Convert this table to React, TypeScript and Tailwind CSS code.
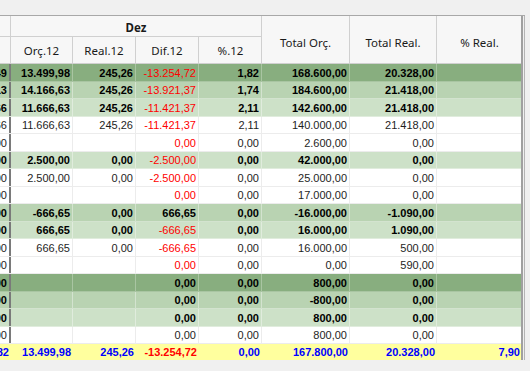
import React from "react";

type Kind = "dark" | "mid" | "light" | "white";
type Row = { k: Kind; c: string[]; red?: boolean };

const rows: Row[] = [
  { k: "dark", c: ["49", "13.499,98", "245,26", "-13.254,72", "1,82", "168.600,00", "20.328,00", ""], red: true },
  { k: "mid", c: ["13", "14.166,63", "245,26", "-13.921,37", "1,74", "184.600,00", "21.418,00", ""], red: true },
  { k: "light", c: ["66", "11.666,63", "245,26", "-11.421,37", "2,11", "142.600,00", "21.418,00", ""], red: true },
  { k: "white", c: ["66", "11.666,63", "245,26", "-11.421,37", "2,11", "140.000,00", "21.418,00", ""], red: true },
  { k: "white", c: ["00", "", "", "0,00", "0,00", "2.600,00", "0,00", ""], red: true },
  { k: "light", c: ["00", "2.500,00", "0,00", "-2.500,00", "0,00", "42.000,00", "0,00", ""], red: true },
  { k: "white", c: ["00", "2.500,00", "0,00", "-2.500,00", "0,00", "25.000,00", "0,00", ""], red: true },
  { k: "white", c: ["00", "", "", "0,00", "0,00", "17.000,00", "0,00", ""], red: true },
  { k: "mid", c: ["00", "-666,65", "0,00", "666,65", "0,00", "-16.000,00", "-1.090,00", ""] },
  { k: "light", c: ["00", "666,65", "0,00", "-666,65", "0,00", "16.000,00", "1.090,00", ""], red: true },
  { k: "white", c: ["00", "666,65", "0,00", "-666,65", "0,00", "16.000,00", "500,00", ""], red: true },
  { k: "white", c: ["00", "", "", "0,00", "0,00", "0,00", "590,00", ""], red: true },
  { k: "dark", c: ["00", "", "", "0,00", "0,00", "800,00", "0,00", ""] },
  { k: "mid", c: ["00", "", "", "0,00", "0,00", "-800,00", "0,00", ""] },
  { k: "light", c: ["00", "", "", "0,00", "0,00", "800,00", "0,00", ""] },
  { k: "white", c: ["00", "", "", "0,00", "0,00", "800,00", "0,00", ""] },
];

const widths = ["w-[11px]", "w-[62px]", "w-[63px]", "w-[63px]", "w-[63px]", "w-[88px]", "w-[87px]", "w-[85px]"];

const bgOf: Record<Kind, string> = {
  dark: "bg-[#88ae7f]",
  mid: "bg-[#b9d3b2]",
  light: "bg-[#cde1c8]",
  white: "bg-white",
};
const lineOf: Record<Kind, string> = {
  dark: "border-[#a9c5a2]",
  mid: "border-[#d3e3cf]",
  light: "border-[#e0ecdd]",
  white: "border-[#ececec]",
};

function DataRow({ r }: { r: Row }) {
  const bold = r.k !== "white";
  return (
    <div className={`flex h-[17.5px] border-b ${lineOf[r.k]} ${bgOf[r.k]}`}>
      {r.c.map((v, i) => {
        const red = i === 3 && r.red;
        const color = red ? "text-[#ff0000]" : bold ? "text-black" : "text-[#1e1e1e]";
        const weight = red ? "font-normal" : bold ? "font-bold" : "font-normal";
        const border =
          i === 0 ? "border-r-2 border-r-[#7a7a7a]" : i === 7 ? "" : `border-r ${lineOf[r.k]}`;
        return (
          <div
            key={i}
            className={`${widths[i]} shrink-0 flex items-center justify-end overflow-hidden whitespace-nowrap pr-[2px] pt-[2px] ${border} ${color} ${weight}`}
          >
            {v}
          </div>
        );
      })}
    </div>
  );
}

const footer = ["82", "13.499,98", "245,26", "-13.254,72", "0,00", "167.800,00", "20.328,00", "7,90"];

export default function App() {
  return (
    <div
      className="w-[530px] h-[371px] bg-[#f0f0f0] overflow-hidden"
      style={{ fontFamily: "'Liberation Sans', Arial, sans-serif" }}
    >
      <div className="h-[15px]" />
      <div className="flex">
        <div className="w-[525px] border-t border-[#a8a8a8] flex">
          <div className="w-[523px] border-r-2 border-[#a0a0a0] flex flex-col">
            {/* header */}
            <div
              className="flex h-[48px] bg-[#f7f7f7] border-b border-[#d0d0d0] text-[11.5px] text-[#1a1a1a]"
              style={{ fontFamily: "'Noto Sans', sans-serif" }}
            >
              <div className="w-[11px] shrink-0 flex flex-col border-r border-[#d0d0d0]">
                <div className="h-[21px] border-b border-[#d0d0d0]" />
                <div className="flex-1" />
              </div>
              <div className="w-[251px] shrink-0 flex flex-col border-r border-[#d0d0d0]">
                <div className="h-[21px] border-b border-[#d0d0d0] flex items-center justify-center pt-[4px] font-bold">
                  Dez
                </div>
                <div className="flex flex-1">
                  {["Orç.12", "Real.12", "Dif.12", "%.12"].map((t, i) => (
                    <div
                      key={t}
                      className={`${i === 0 ? "w-[62px]" : "w-[63px]"} shrink-0 flex items-center justify-center pt-[2px] ${
                        i < 3 ? "border-r border-[#d0d0d0]" : ""
                      }`}
                    >
                      {t}
                    </div>
                  ))}
                </div>
              </div>
              <div className="w-[88px] shrink-0 flex items-center justify-center pt-[6px] border-r border-[#d0d0d0]">
                Total Orç.
              </div>
              <div className="w-[87px] shrink-0 flex items-center justify-center pt-[6px] border-r border-[#d0d0d0]">
                Total Real.
              </div>
              <div className="w-[85px] shrink-0 flex items-center justify-center pt-[6px]">% Real.</div>
            </div>
            {/* data */}
            <div className="text-[11px] leading-none">
              {rows.map((r, i) => (
                <DataRow key={i} r={r} />
              ))}
              <div className="flex h-[16px] bg-[#ffff9e] font-bold">
                {footer.map((v, i) => (
                  <div
                    key={i}
                    className={`${widths[i]} shrink-0 flex items-center justify-end overflow-hidden whitespace-nowrap pr-[2px] pt-[1px] ${
                      i === 3 ? "text-[#ff0000]" : "text-[#0000ff]"
                    }`}
                  >
                    {v}
                  </div>
                ))}
              </div>
            </div>
          </div>
          <div className="w-[2px] self-stretch border-r border-[#b4b4b4]" />
        </div>
      </div>
    </div>
  );
}
